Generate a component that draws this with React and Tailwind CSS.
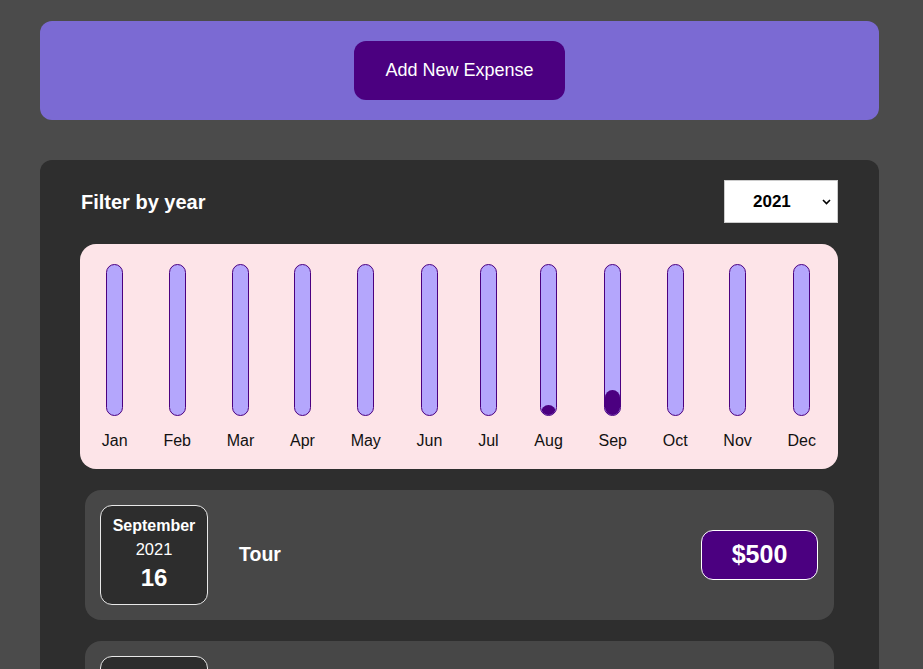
import React from "react";

const months = [
  ["Jan", 0], ["Feb", 0], ["Mar", 0], ["Apr", 0], ["May", 0], ["Jun", 0],
  ["Jul", 0], ["Aug", 7], ["Sep", 17], ["Oct", 0], ["Nov", 0], ["Dec", 0],
];

function Bar({ label, fill }) {
  return (
    <div className="flex flex-col items-center h-full">
      <div className="w-[17px] h-[152px] rounded-full border border-[#4b0080] bg-[#b4a6fc] overflow-hidden flex flex-col justify-end">
        {fill > 0 && <div className="w-full bg-[#4b0080] rounded-t-full" style={{ height: fill + "%" }} />}
      </div>
      <div className="mt-[15px] text-[16px] leading-[20px] text-[#111]">{label}</div>
    </div>
  );
}

function Item({ month, year, day, title, price }) {
  return (
    <div className="mx-[5px] h-[130px] rounded-[16px] bg-[#474747] flex items-center pl-[15px] pr-[16px]">
      <div className="w-[108px] h-[100px] rounded-[12px] border border-[#e8e8e8] bg-[#2d2d2d] text-white flex flex-col items-center pt-[10px]">
        <div className="text-[16px] font-bold leading-[20px]">{month}</div>
        <div className="text-[16.5px] leading-[20px] mt-[3px]">{year}</div>
        <div className="text-[24px] font-bold leading-[28px] mt-[5px]">{day}</div>
      </div>
      <div className="ml-[31px] flex-1 text-white text-[19.5px] font-bold">{title}</div>
      <div className="w-[117px] h-[50px] rounded-[12px] border border-white bg-[#4b0080] text-white text-[25px] font-bold flex items-center justify-center">
        {price}
      </div>
    </div>
  );
}

export default function App() {
  return (
    <div className="min-h-screen bg-[#4b4b4b] pt-[21px] pl-[40px] pr-[44px] pb-[40px]" style={{ fontFamily: '"Liberation Sans", Arial, sans-serif' }}>
      <div className="h-[99px] rounded-[12px] bg-[#7b6ad3] flex items-center justify-center">
        <button className="w-[211px] h-[59px] rounded-[12px] bg-[#4b0080] text-white text-[18px]">
          Add New Expense
        </button>
      </div>

      <div className="mt-[40px] rounded-[12px] bg-[#2e2e2e] pt-[20px] px-[40px] pb-[20px]">
        <div className="flex items-center justify-between h-[43px] pl-[1px] pr-[1px]">
          <div className="text-white text-[20px] font-bold">Filter by year</div>
          <div className="relative w-[114px] h-[43px] bg-white border border-[#ccc] flex items-center">
            <span className="ml-[28px] text-[17px] font-bold text-black">2021</span>
            <svg className="absolute right-[6px] top-[18px]" width="9" height="6" viewBox="0 0 9 6">
              <path d="M1 1 L4.5 4.5 L8 1" fill="none" stroke="#000" strokeWidth="1.6" />
            </svg>
          </div>
        </div>

        <div className="mt-[21px] h-[225px] rounded-[16px] bg-[#fde4e8] pt-[20px] pb-[14px] px-[4px] flex justify-around mr-[1px]">
          {months.map(([m, f]) => (
            <Bar key={m} label={m} fill={f} />
          ))}
        </div>

        <div className="mt-[21px] flex flex-col gap-[21px]">
          <Item month="September" year="2021" day="16" title="Tour" price="$500" />
          <Item month="August" year="2021" day="10" title="Shopping" price="$200" />
        </div>
      </div>
    </div>
  );
}
